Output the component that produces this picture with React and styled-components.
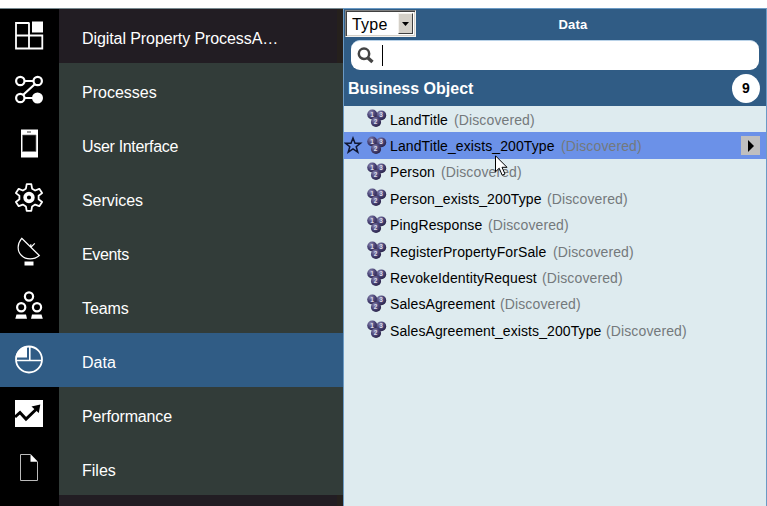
import React from "react";
import styled, { createGlobalStyle } from "styled-components";

const Global = createGlobalStyle`
  * { box-sizing: border-box; }
  body { margin: 0; background: #fff; font-family: "Liberation Sans", Arial, sans-serif; overflow: hidden; }
  svg { display: block; }
`;

const Page = styled.div`
  position: relative;
  width: 767px;
  height: 506px;
  padding-top: 8px;
  display: flex;
  background: #fff;
  overflow: hidden;
`;

const Sidebar = styled.nav`
  width: 343px;
  height: 498px;
  border-top: 1px solid #76888f;
  background: linear-gradient(90deg, #221d23 0 337px, #25201d 337px);
`;

const MenuRow = styled.div`
  display: flex;
  height: 54px;
  color: #fff;
  background: ${(p) => (p.$kind === "active" ? "#305c85" : p.$kind === "top" ? "transparent" : "#323c39")};
`;

const IconCell = styled.div`
  width: 59px;
  padding: 12px 0 0 14px;
  background: ${(p) => (p.$active ? "#305c85" : "#000")};
`;

const MenuLabel = styled.div`
  padding-left: 23px;
  line-height: 60px;
  height: 54px;
  font-size: 16px;
  letter-spacing: ${(p) => p.$spacing || 0}px;
  white-space: nowrap;
`;

const SidebarEnd = styled.div`
  width: 59px;
  height: 11px;
  background: #000;
`;

const Panel = styled.section`
  width: 424px;
  height: 498px;
  border: 1px solid #6b9ac4;
  border-bottom: 0;
  background: #deebef;
`;

const PanelTop = styled.header`
  height: 97px;
  background: #305c85;
  color: #fff;
`;

const TitleBar = styled.div`
  display: flex;
  height: 31px;
  padding: 1px 0 0 1px;
`;

const TypeSelect = styled.div`
  display: flex;
  width: 71px;
  height: 27px;
  border: 1px solid;
  border-color: #808080 #f4f2ee #f4f2ee #808080;
  box-shadow: inset 1px 1px #404040, inset -1px -1px #d4d0c8;
  background: #fff;
  color: #000;
  font-size: 16px;
  padding: 2px;
`;

const SelectText = styled.span`
  width: 50px;
  padding-left: 4px;
  line-height: 24px;
  letter-spacing: 0.2px;
`;

const SelectArrow = styled.span`
  display: flex;
  align-items: center;
  justify-content: center;
  width: 15px;
  height: 21px;
  background: #d4d0c8;
  border: 1px solid;
  border-color: #f4f2ee #404040 #404040 #f4f2ee;
`;

const PanelTitle = styled.h1`
  margin: 0;
  width: 314px;
  text-align: center;
  font-size: 13px;
  line-height: 29px;
  letter-spacing: 0.2px;
`;

const Search = styled.div`
  display: flex;
  align-items: center;
  width: 408px;
  height: 30px;
  margin-left: 7px;
  padding-left: 6px;
  gap: 7px;
  border-radius: 9px;
  border-top: 1px solid #b9d2e8;
  background: #fff;
`;

const Caret = styled.span`
  width: 1px;
  height: 21px;
  margin-left: 1px;
  background: #000;
`;

const GroupBar = styled.div`
  display: flex;
  align-items: center;
  justify-content: space-between;
  height: 36px;
  padding: 0 6px 0 4px;
`;

const GroupName = styled.h2`
  margin: 0;
  padding-top: 2px;
  font-size: 16px;
`;

const Count = styled.span`
  width: 28px;
  height: 29px;
  border-radius: 50%;
  background: #fff;
  color: #000;
  font-size: 14px;
  font-weight: bold;
  line-height: 29px;
  text-align: center;
`;

const List = styled.div`
  display: grid;
  grid-template-rows: repeat(9, 26.4px);
`;

const ObjectRow = styled.div`
  display: flex;
  align-items: center;
  padding-right: 6px;
  background: ${(p) => (p.$selected ? "#6b91e8" : "transparent")};
  font-size: 14px;
  white-space: nowrap;
`;

const StarCell = styled.span`
  width: 23px;
`;

const ObjectName = styled.span`
  padding-left: 3px;
  padding-top: 1px;
  width: ${(p) => p.$width + 3}px;
  color: #000;
  letter-spacing: 0.1px;
`;

const Status = styled.span`
  padding: 1px 0 0 6px;
  color: #74797c;
  letter-spacing: 0.12px;
  flex: 1;
`;

const MoreButton = styled.span`
  display: flex;
  align-items: center;
  justify-content: center;
  width: 19px;
  height: 19px;
  background: #bfbfbf;
`;

const Pointer = styled.svg`
  position: absolute;
  left: 495px;
  top: 155px;
`;

const Glyph = ({ children }) => (
  <svg width="30" height="30" viewBox="0 0 30 30" fill="none" stroke="#fff" strokeWidth="1.6">{children}</svg>
);

const icons = {
  grid: (
    <Glyph>
      <path d="M15.500 2H2v25.500h26.300V14.500H2M15 2v25.500" stroke="#fff" strokeWidth="1.800" />
      <path d="M18 .5h11v11H18z" fill="#fff" stroke="none" />
    </Glyph>
  ),
  flow: (
    <Glyph>
      <path d="M11 6h8M21 9L9 20M11 23h8" strokeWidth="2.200" />
      <circle cx="6.300" cy="6" r="4.200" strokeWidth="2.200" />
      <circle cx="23.700" cy="6" r="4.200" strokeWidth="2.200" />
      <circle cx="6.300" cy="23" r="4.200" strokeWidth="2.200" />
      <circle cx="23.500" cy="23" r="5.500" fill="#fff" stroke="none" />
    </Glyph>
  ),
  phone: (
    <Glyph>
      <path d="M7 .5h17v28H7z" fill="#fff" stroke="none" />
      <path d="M8.500 6h13.500v16.500H8.500z" fill="#000" stroke="#777" strokeWidth=".7" />
      <path d="M13 3h4" stroke="#777" strokeWidth="1.500" />
    </Glyph>
  ),
  gear: (
    <Glyph>
      <path d="M12.700 1.200h4.600l.8 4.500 3 1.800 4.200-1.700 2.800 4.300-3.500 2.600v3.600l3.500 2.700-2.800 4.200-4.200-1.600-3 1.800-.8 4.400h-4.600l-.8-4.400-3-1.800-4.200 1.600L1.900 19l3.500-2.700v-3.600L1.900 10.100l2.800-4.300 4.200 1.700 3-1.800z" strokeWidth="1.800" strokeLinejoin="round" />
      <circle cx="15" cy="14.500" r="3.900" strokeWidth="3.600" />
    </Glyph>
  ),
  dish: (
    <Glyph>
      <path d="M7.700 1.300L25.300 18.500C20 23 12 23 7.500 18.500S3 7 7.700 1.300zM16.800 10.300l4-4M16.800 10.300v-3" strokeWidth="1.200" />
      <path d="M10.500 24.500h9v4h-9z" fill="#fff" stroke="none" />
    </Glyph>
  ),
  teams: (
    <Glyph>
      <circle cx="15" cy="5.500" r="4.100" strokeWidth="2.200" />
      <circle cx="7.200" cy="16.300" r="4.100" strokeWidth="2.200" />
      <circle cx="23" cy="16.300" r="4.100" strokeWidth="2.200" />
      <path d="M2.500 23.500h9.500l1 4.300H1.300zM18 23.500h9.500l1.300 4.300H17z" fill="#fff" stroke="none" />
    </Glyph>
  ),
  pie: (
    <Glyph>
      <circle cx="15" cy="14.500" r="13" strokeWidth="1.800" />
      <path d="M2 15.500h26M15.800 1.500v14" strokeWidth="1.600" />
      <path d="M13 1v11.500H1.500C2 6.500 7 1.500 13 1z" fill="#fff" stroke="none" />
    </Glyph>
  ),
  trend: (
    <Glyph>
      <path d="M1 1h28v27H1z" fill="#fff" stroke="none" />
      <path d="M1 18l5-4.500 6 6.500 10-9.500" stroke="#000" strokeWidth="3" />
      <path d="M17.500 7.500L26.300 5.500 24.800 14z" fill="#000" stroke="none" />
    </Glyph>
  ),
  file: (
    <Glyph>
      <path d="M16.500 1.500h-10v26h17V9" stroke="#bbb" strokeWidth="1" />
      <path d="M16.500 1l7.500 7.800h-7.500z" fill="#fff" stroke="none" />
    </Glyph>
  ),
};

const Spheres = () => (
  <svg width="20" height="20" viewBox="0 0 20 20">
    <defs>
      <radialGradient id="sphere" cx=".36" cy=".3" r=".75">
        <stop offset="0" stopColor="#8b88b0" />
        <stop offset=".5" stopColor="#4d477a" />
        <stop offset="1" stopColor="#262044" />
      </radialGradient>
    </defs>
    <circle cx="5.300" cy="5.500" r="5.100" fill="url(#sphere)" />
    <circle cx="14.300" cy="6.300" r="4.900" fill="url(#sphere)" />
    <circle cx="9" cy="13" r="5.100" fill="url(#sphere)" />
    <g fill="#dddbe9" fontFamily="Liberation Sans" fontWeight="bold" fontSize="6.500" textAnchor="middle">
      <text x="5" y="7.500">1</text>
      <text x="14" y="8">3</text>
      <text x="8.500" y="15">2</text>
    </g>
  </svg>
);

const menu = [
  { icon: "grid", label: "Digital Property ProcessA…", kind: "top", spacing: -0.08 },
  { icon: "flow", label: "Processes", spacing: 0 },
  { icon: "phone", label: "User Interface", spacing: -0.32 },
  { icon: "gear", label: "Services", spacing: -0.05 },
  { icon: "dish", label: "Events", spacing: -0.35 },
  { icon: "teams", label: "Teams", spacing: -0.1 },
  { icon: "pie", label: "Data", kind: "active" },
  { icon: "trend", label: "Performance", spacing: -0.15 },
  { icon: "file", label: "Files" },
];

const objects = [
  ["LandTitle", 58],
  ["LandTitle_exists_200Type", 165],
  ["Person", 45],
  ["Person_exists_200Type", 151],
  ["PingResponse", 92],
  ["RegisterPropertyForSale", 157],
  ["RevokeIdentityRequest", 146],
  ["SalesAgreement", 104],
  ["SalesAgreement_exists_200Type", 210],
];

export default function App() {
  return (
    <>
      <Global />
      <Page>
        <Sidebar>
          {menu.map((m) => (
            <MenuRow key={m.label} $kind={m.kind}>
              <IconCell $active={m.kind === "active"}>{icons[m.icon]}</IconCell>
              <MenuLabel $spacing={m.spacing}>{m.label}</MenuLabel>
            </MenuRow>
          ))}
          <SidebarEnd />
        </Sidebar>
        <Panel>
          <PanelTop>
            <TitleBar>
              <TypeSelect>
                <SelectText>Type</SelectText>
                <SelectArrow>
                  <svg width="7" height="4"><path d="M0 0h7L3.500 4z" fill="#000" /></svg>
                </SelectArrow>
              </TypeSelect>
              <PanelTitle>Data</PanelTitle>
            </TitleBar>
            <Search>
              <svg width="17" height="17" viewBox="0 0 17 17" fill="none" stroke="#444">
                <circle cx="7" cy="6.700" r="5.200" strokeWidth="2.500" />
                <path d="M11 11l4.500 4" strokeWidth="3.400" />
              </svg>
              <Caret />
            </Search>
            <GroupBar>
              <GroupName>Business Object</GroupName>
              <Count>9</Count>
            </GroupBar>
          </PanelTop>
          <List>
            {objects.map(([name, width], i) => (
              <ObjectRow key={name} $selected={i === 1}>
                <StarCell>
                  {i === 1 && (
                    <svg width="19" height="20" viewBox="0 0 19 20">
                      <path d="M9 2l2 5.200h5.500l-4.300 3.500 1.600 5.500L9 13l-4.800 3.200 1.600-5.500L1.500 7.200H7z" fill="none" stroke="#111833" strokeWidth="1.500" />
                    </svg>
                  )}
                </StarCell>
                <Spheres />
                <ObjectName $width={width}>{name}</ObjectName>
                <Status>(Discovered)</Status>
                {i === 1 && (
                  <MoreButton>
                    <svg width="7" height="12"><path d="M1 0l6 6-6 6z" fill="#000" /></svg>
                  </MoreButton>
                )}
              </ObjectRow>
            ))}
          </List>
        </Panel>
        <Pointer width="14" height="22" viewBox="0 0 14 22">
          <path d="M.5.800v16l3.700-3.600 3 7 2.800-1.200-3-6.700h5z" fill="#fff" stroke="#000" />
        </Pointer>
      </Page>
    </>
  );
}
